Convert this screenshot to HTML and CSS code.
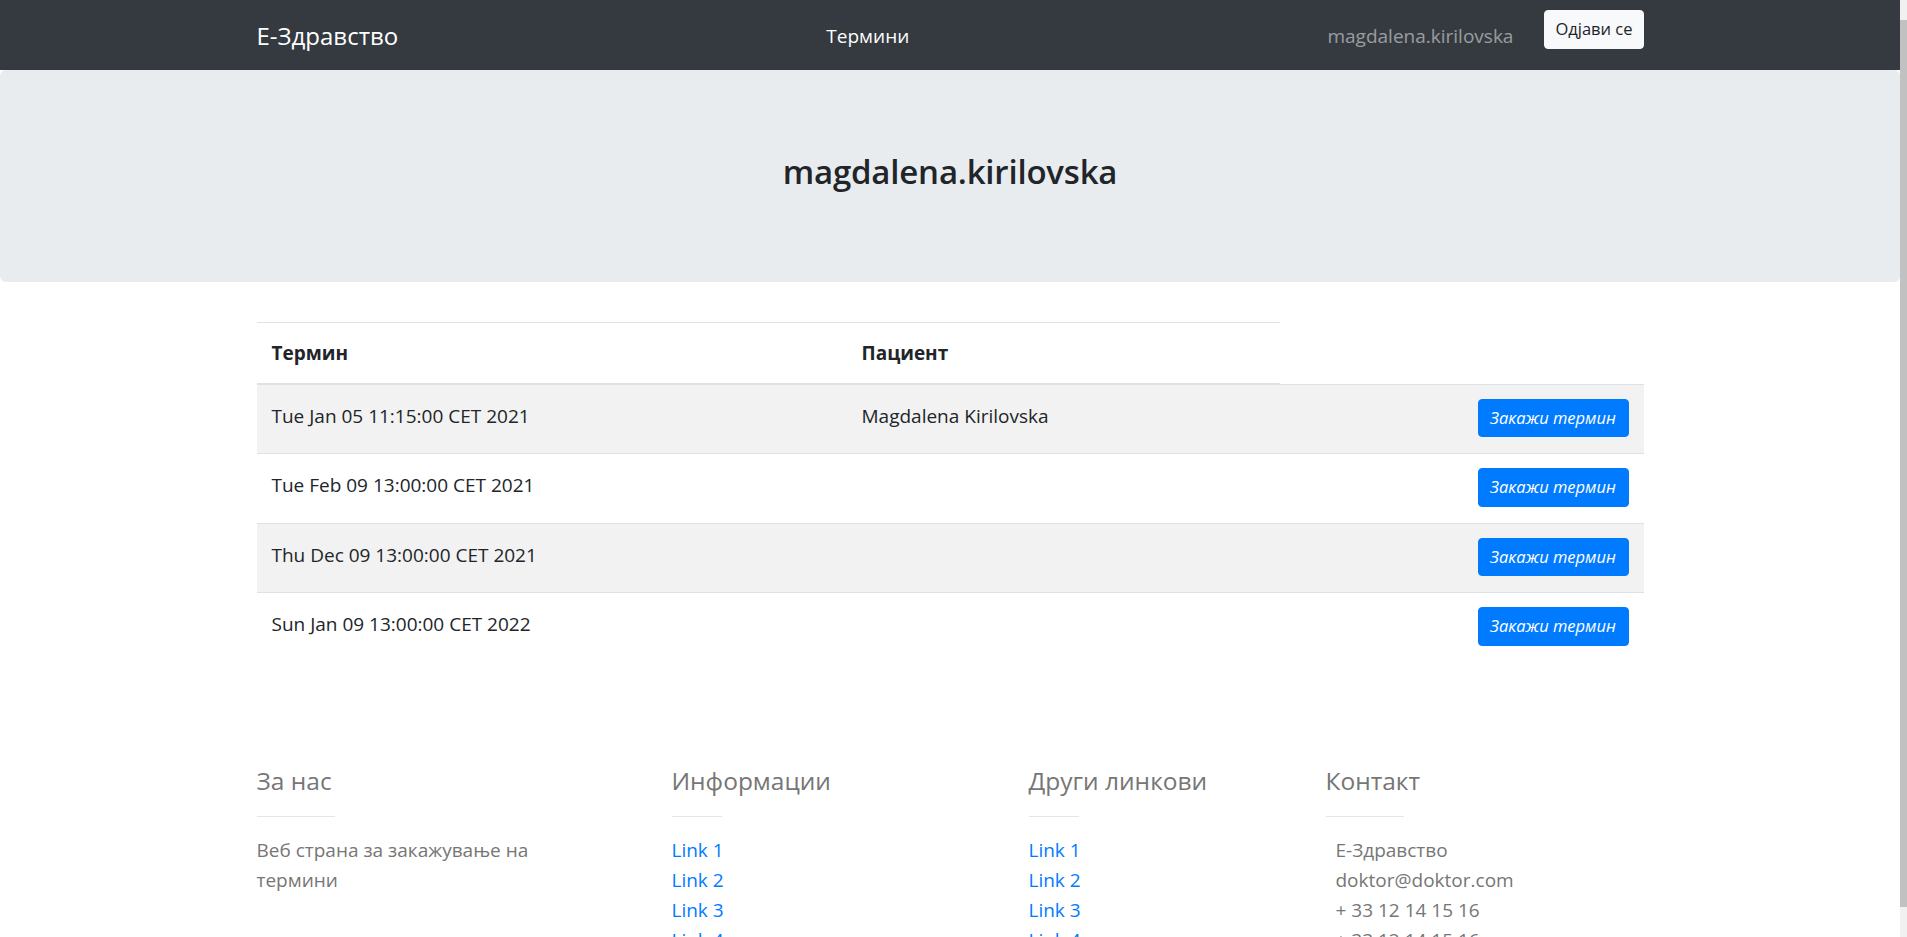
FILE: index.html
```html
<!DOCTYPE html>
<html>
<head>
<meta charset="utf-8">
<title>Е-Здравство</title>
<link rel="stylesheet" href="styles.css">
</head>
<body>
<div class="page">
  <nav class="navbar">
    <div class="container nav-inner">
      <a class="brand" href="#">Е-Здравство</a>
      <ul class="nav-center">
        <li><a class="nav-link" href="#">Термини</a></li>
      </ul>
      <span class="nav-user">magdalena.kirilovska</span>
      <button class="btn btn-light">Одјави се</button>
    </div>
  </nav>

  <header class="jumbotron">
    <h3 class="jumbo-title">magdalena.kirilovska</h3>
  </header>

  <main class="container">
    <table class="table">
      <colgroup>
        <col class="c-term">
        <col class="c-patient">
        <col class="c-action">
      </colgroup>
      <thead>
        <tr><th>Термин</th><th>Пациент</th></tr>
      </thead>
      <tbody>
        <tr><td>Tue Jan 05 11:15:00 CET 2021</td><td>Magdalena Kirilovska</td><td class="action"><button class="btn btn-primary">Закажи термин</button></td></tr>
        <tr><td>Tue Feb 09 13:00:00 CET 2021</td><td></td><td class="action"><button class="btn btn-primary">Закажи термин</button></td></tr>
        <tr><td>Thu Dec 09 13:00:00 CET 2021</td><td></td><td class="action"><button class="btn btn-primary">Закажи термин</button></td></tr>
        <tr><td>Sun Jan 09 13:00:00 CET 2022</td><td></td><td class="action"><button class="btn btn-primary">Закажи термин</button></td></tr>
      </tbody>
    </table>
  </main>

  <footer class="footer">
    <div class="container footer-row">
      <section class="fcol fcol-about">
        <h5 class="footer-title">За нас</h5>
        <hr class="footer-rule">
        <p class="footer-text">Веб страна за закажување на термини</p>
      </section>
      <section class="fcol fcol-info">
        <h5 class="footer-title">Информации</h5>
        <hr class="footer-rule short">
        <ul class="footer-list">
          <li><a href="#">Link 1</a></li>
          <li><a href="#">Link 2</a></li>
          <li><a href="#">Link 3</a></li>
          <li><a href="#">Link 4</a></li>
        </ul>
      </section>
      <section class="fcol fcol-links">
        <h5 class="footer-title">Други линкови</h5>
        <hr class="footer-rule short">
        <ul class="footer-list">
          <li><a href="#">Link 1</a></li>
          <li><a href="#">Link 2</a></li>
          <li><a href="#">Link 3</a></li>
          <li><a href="#">Link 4</a></li>
        </ul>
      </section>
      <section class="fcol fcol-contact">
        <h5 class="footer-title">Контакт</h5>
        <hr class="footer-rule">
        <ul class="footer-list contact">
          <li>Е-Здравство</li>
          <li>doktor@doktor.com</li>
          <li>+ 33 12 14 15 16</li>
          <li>+ 33 12 14 15 16</li>
        </ul>
      </section>
    </div>
  </footer>
</div>
<div class="scrollbar"><div class="scroll-thumb"></div></div>
</body>
</html>
```
FILE: styles.css
```css
* { box-sizing: border-box; }

html, body {
  margin: 0;
  height: 937px;
  overflow: hidden;
}

body {
  display: flex;
  font-family: "Open Sans", "Noto Sans", sans-serif;
  font-size: 19px;
  line-height: 30px;
  color: #212529;
  background: #fff;
}

.page { flex: 1; min-width: 0; }

.scrollbar {
  width: 7px;
  background: #f1f1f1;
  display: flex;
  flex-direction: column;
  padding: 20px 0 30px;
}
.scroll-thumb { flex: 1; background: #c1c1c1; }

.container { width: 1387px; margin: 0 auto; }

/* navbar */
.navbar { background: #343a40; padding: 10px 0; }
.nav-inner { display: flex; align-items: center; height: 50px; }
.brand {
  font-size: 24px;
  line-height: 37.5px;
  color: #fff;
  text-decoration: none;
  margin-right: 20px;
  padding-top: 2px;
}
.nav-center {
  flex: 1;
  display: flex;
  justify-content: center;
  list-style: none;
  margin: 0;
  padding: 0;
}
.nav-link { color: #fff; text-decoration: none; padding: 2px 10px 0; display: block; }
.nav-user { color: rgba(255, 255, 255, 0.5); padding: 2px 10px 0; margin-right: 21px; }

/* buttons */
.btn {
  font-family: inherit;
  border: 1px solid transparent;
  border-radius: 4px;
  font-size: 16.5px;
  line-height: 26.5px;
  padding: 5px 10px;
  cursor: pointer;
}
.btn-light {
  background: #f8f9fa;
  border-color: #f8f9fa;
  color: #212529;
  align-self: flex-start;
  padding: 5px 10px;
}
.btn-primary {
  background: #007bff;
  border-color: #007bff;
  color: #fff;
  font-style: italic;
  padding: 5px 10px;
  min-width: 151px;
}

/* jumbotron */
.jumbotron {
  background: #e9ecef;
  border-radius: 6px;
  padding: 80px 40px;
  margin-bottom: 40px;
  text-align: center;
}
.jumbo-title {
  margin: 0 0 10px;
  padding-top: 2px;
  font-size: 33px;
  line-height: 40px;
  font-weight: 600;
  letter-spacing: -0.2px;
}

/* table */
.table { width: 100%; border-collapse: collapse; table-layout: fixed; margin: 0; }
.c-term { width: 590px; }
.c-patient { width: 433px; }
.table th, .table td {
  padding: 15px;
  text-align: left;
  vertical-align: top;
  border-top: 1px solid #dee2e6;
}
.table thead th { border-bottom: 2px solid #dee2e6; font-weight: 700; }
.table tbody td { padding-top: 16px; padding-bottom: 14px; }
.table tbody td.action { padding-top: 14px; padding-bottom: 16px; }
.table tbody tr:nth-child(odd) { background: rgba(0, 0, 0, 0.05); }
.table td.action { text-align: right; }
.action .btn { vertical-align: top; }

/* footer */
.footer { padding-top: 104px; color: #767676; }
.footer-row { display: flex; }
.fcol-about { width: 415px; }
.fcol-info { width: 357px; }
.fcol-links { width: 297px; }
.fcol-contact { flex: 1; }
.footer-title {
  font-size: 24.5px;
  line-height: 30px;
  font-weight: 500;
  margin: 0 0 20px;
}
.footer-rule {
  width: 78px;
  margin: 0 0 18px;
  border: 0;
  border-top: 1px solid rgba(0, 0, 0, 0.1);
  height: 0;
}
.footer-rule.short { width: 50px; }
.footer-text { margin: 0; max-width: 320px; }
.footer-list { list-style: none; margin: 0; padding: 0; }
.footer-list a { color: #007bff; text-decoration: none; }
.footer-list.contact { padding-left: 10px; }
```
